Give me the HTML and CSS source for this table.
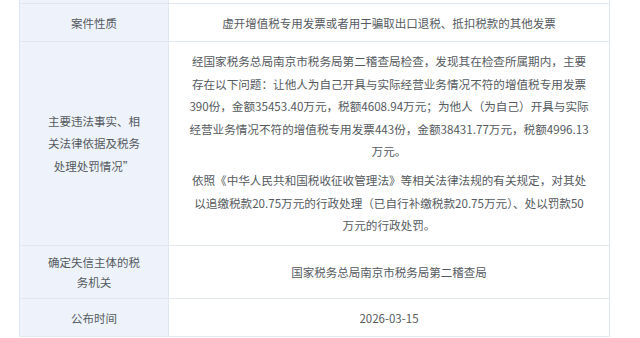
FILE: index.html
```html
<!DOCTYPE html>
<html lang="zh-CN">
<head>
<meta charset="utf-8">
<link rel="stylesheet" href="styles.css">
</head>
<body>
<div class="page">
  <table class="info">
    <tr class="r0"><th></th><td></td></tr>
    <tr class="r1">
      <th>案件性质</th>
      <td>虚开增值税专用发票或者用于骗取出口退税、抵扣税款的其他发票</td>
    </tr>
    <tr class="r2">
      <th><div class="label">主要违法事实、相关法律依据及税务处理处罚情况”</div></th>
      <td>
        <p>经国家税务总局南京市税务局第二稽查局检查，发现其在检查所属期内，主要<br>存在以下问题：让他人为自己开具与实际经营业务情况不符的增值税专用发票<br>390份，金额35453.40万元，税额4608.94万元；为他人（为自己）开具与实际<br>经营业务情况不符的增值税专用发票443份，金额38431.77万元，税额4996.13<br>万元。</p>
        <p>依照《中华人民共和国税收征收管理法》等相关法律法规的有关规定，对其处<br>以追缴税款20.75万元的行政处理（已自行补缴税款20.75万元）、处以罚款50<br>万元的行政处罚。</p>
      </td>
    </tr>
    <tr class="r3">
      <th><div class="label tight">确定失信主体的税务机关</div></th>
      <td>国家税务总局南京市税务局第二稽查局</td>
    </tr>
    <tr class="r4">
      <th>公布时间</th>
      <td>2026-03-15</td>
    </tr>
  </table>
</div>
</body>
</html>
```

FILE: styles.css
```css
html, body {
  margin: 0;
  padding: 0;
  background: #ffffff;
}
.page {
  padding-left: 19px;
  width: 591px;
}
.info {
  width: 591px;
  border-collapse: collapse;
  table-layout: fixed;
  font-family: "Noto Sans CJK SC", "Microsoft YaHei", sans-serif;
  font-size: 11.5px;
  color: #555a60;
}
.info th, .info td {
  border: 1px solid #e1e7ee;
  padding: 0;
  text-align: center;
  vertical-align: middle;
  font-weight: normal;
  line-height: 22px;
}
.info th {
  width: 148px;
  background: #eef3fb;
}
.info td {
  background: #ffffff;
}
.info .r0 th, .info .r0 td {
  border-top: none;
  height: 3px;
  line-height: 0;
}
.r1 th, .r1 td { height: 37px; }
.r2 th, .r2 td { height: 203px; }
.r3 th, .r3 td { height: 52px; }
.r4 th, .r4 td { height: 37px; }
.r2 td {
  font-size: 11.6px;
  line-height: 22.5px;
  padding: 0 12px;
}
.r2 td p {
  margin: 0;
}
.r2 td p + p {
  margin-top: 6.5px;
}
.label {
  width: 96px;
  margin: 0 auto;
  line-height: 22.5px;
}
.label.tight {
  line-height: 20px;
}
```
